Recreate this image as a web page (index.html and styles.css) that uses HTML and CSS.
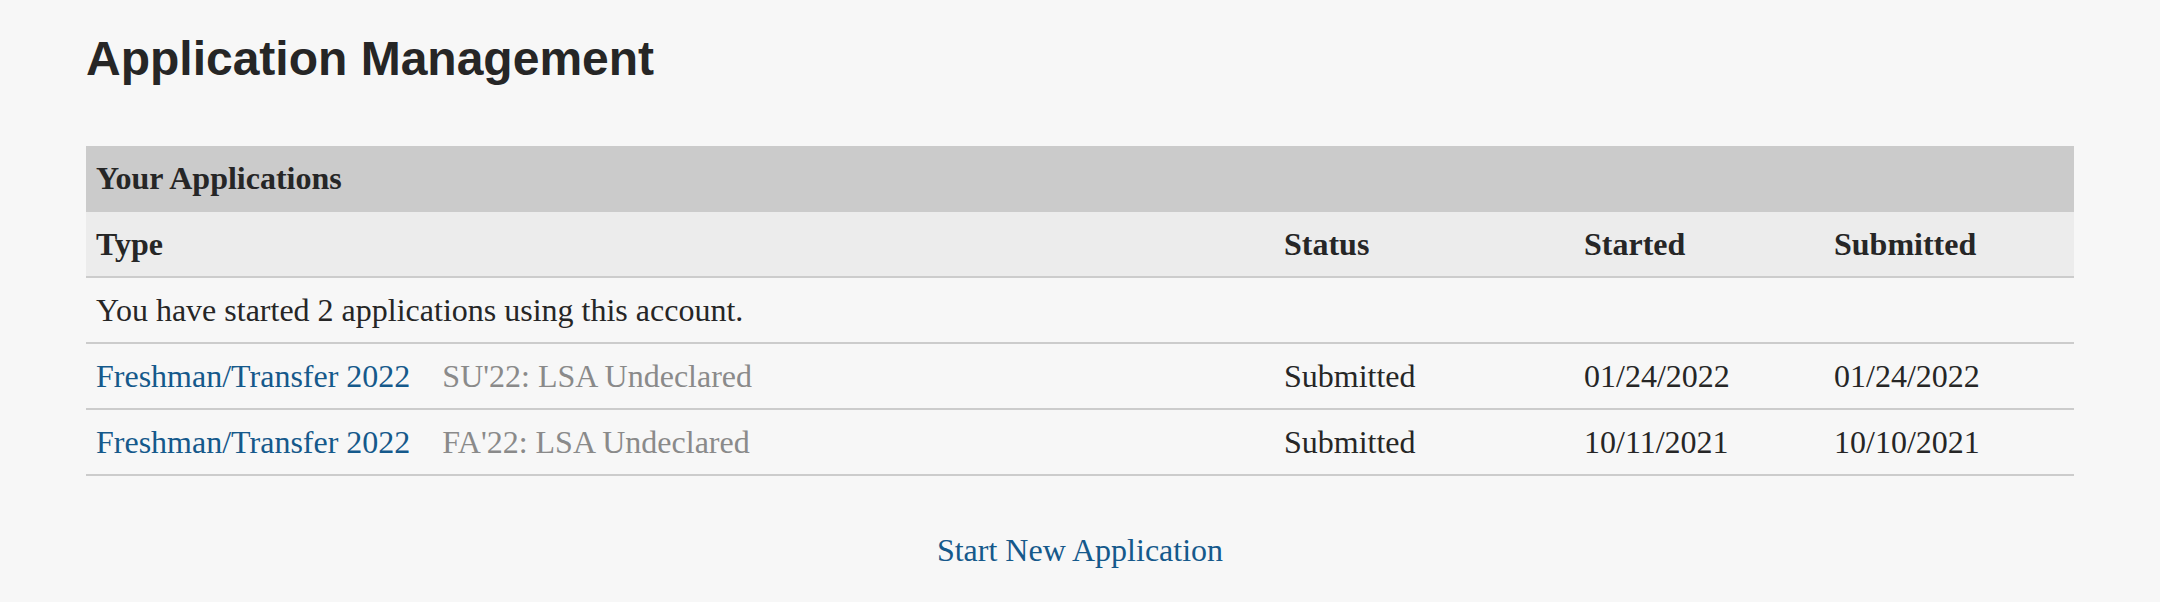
FILE: index.html
```html
<!DOCTYPE html>
<html lang="en">
<head>
<meta charset="utf-8">
<title>Application Management</title>
<link rel="stylesheet" href="styles.css">
</head>
<body>
<main class="page">
  <h1 class="page-title">Application Management</h1>
  <table class="apps">
    <colgroup>
      <col class="col-type">
      <col class="col-status">
      <col class="col-started">
      <col class="col-submitted">
    </colgroup>
    <thead>
      <tr class="caption-row"><th colspan="4">Your Applications</th></tr>
      <tr class="head-row">
        <th>Type</th>
        <th>Status</th>
        <th>Started</th>
        <th>Submitted</th>
      </tr>
    </thead>
    <tbody>
      <tr><td colspan="4">You have started 2 applications using this account.</td></tr>
      <tr>
        <td><a class="app-link" href="#">Freshman/Transfer 2022</a><span class="app-term">SU'22: LSA Undeclared</span></td>
        <td>Submitted</td>
        <td>01/24/2022</td>
        <td>01/24/2022</td>
      </tr>
      <tr>
        <td><a class="app-link" href="#">Freshman/Transfer 2022</a><span class="app-term">FA'22: LSA Undeclared</span></td>
        <td>Submitted</td>
        <td>10/11/2021</td>
        <td>10/10/2021</td>
      </tr>
    </tbody>
  </table>
  <p class="new-app"><a class="app-link" href="#">Start New Application</a></p>
</main>
</body>
</html>
```

FILE: styles.css
```css
html, body {
  margin: 0;
  padding: 0;
  background: #f7f7f7;
}

.page {
  padding: 32px 86px 0;
  color: #262626;
  font-family: "Liberation Serif", "Times New Roman", serif;
}

.page-title {
  margin: 0;
  font-family: "Liberation Sans", Arial, sans-serif;
  font-weight: bold;
  font-size: 48px;
  line-height: 54px;
  color: #262626;
}

.apps {
  margin-top: 60px;
  width: 100%;
  border-collapse: collapse;
  font-size: 32px;
  line-height: 36px;
}

.col-status { width: 300px; }
.col-started { width: 250px; }
.col-submitted { width: 250px; }

.apps th,
.apps td {
  text-align: left;
  padding: 14px 10px;
  vertical-align: middle;
  white-space: nowrap;
}

.apps th {
  font-weight: bold;
}

.caption-row th {
  background: #cbcbcb;
  padding-bottom: 16px;
}

.head-row th {
  background: #ececec;
  border-bottom: 2px solid #cccccc;
}

.apps tbody tr {
  border-bottom: 2px solid #cccccc;
}

.app-link {
  color: #15598b;
  text-decoration: none;
}

.app-term {
  margin-left: 32px;
  color: #8a8a8a;
}

.new-app {
  margin: 56px 0 0;
  text-align: center;
  font-size: 32px;
  line-height: 36px;
}
```
